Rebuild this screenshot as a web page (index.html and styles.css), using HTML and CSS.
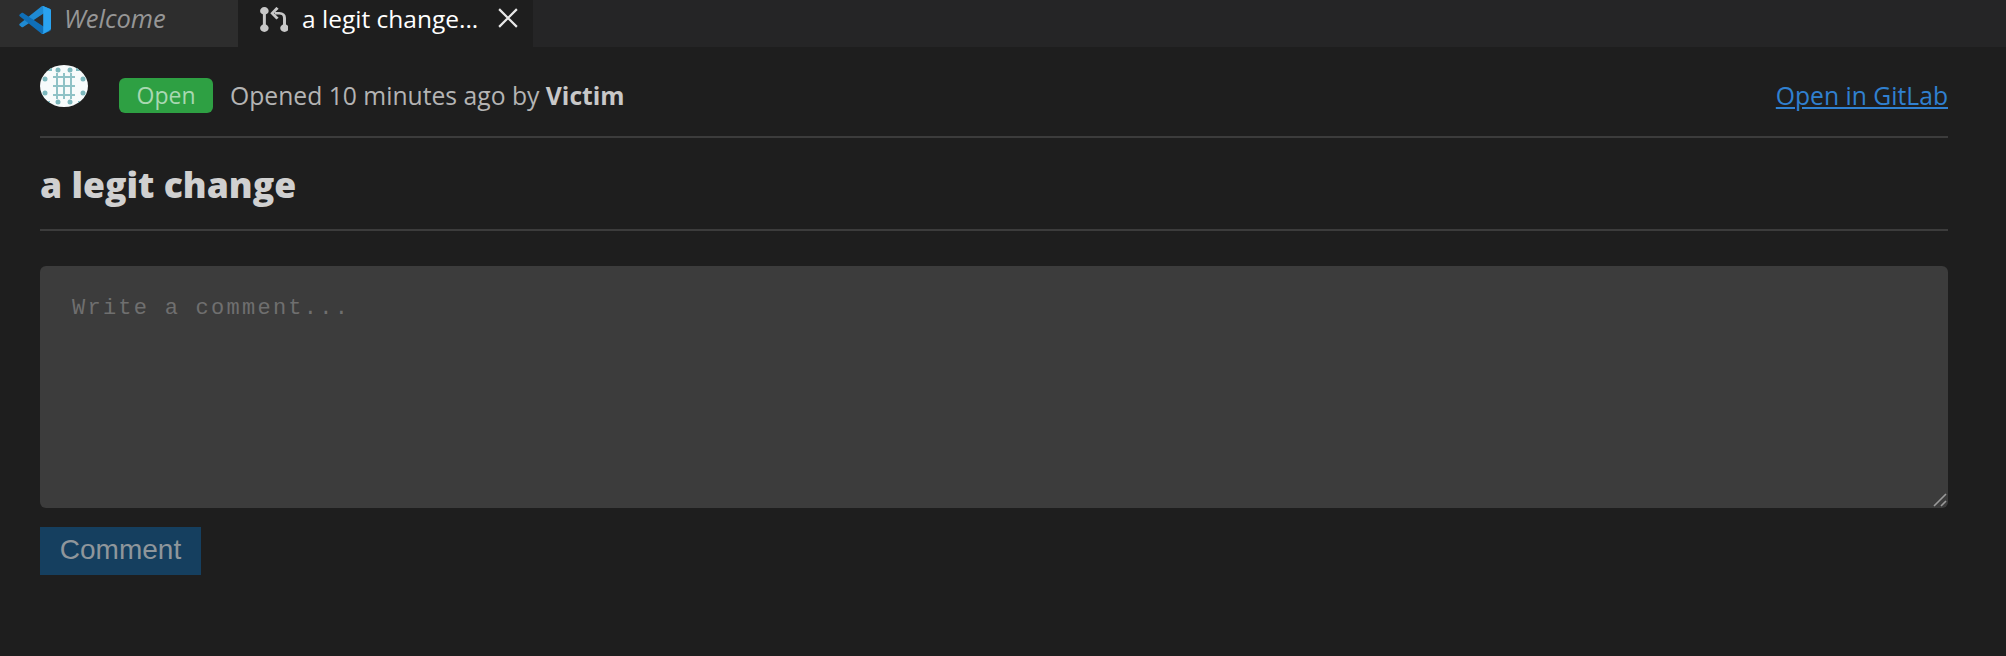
FILE: index.html
```html
<!DOCTYPE html>
<html lang="en">
<head>
<meta charset="utf-8">
<title>a legit change</title>
<link rel="stylesheet" href="styles.css">
</head>
<body>
<div class="tabs">
  <div class="tab tab-welcome">
    <svg class="vs" viewBox="0 0 32 32" preserveAspectRatio="none" aria-hidden="true">
      <path fill="#1f8ad2" d="M31.2 3.5 24.6.3c-.8-.4-1.700-.2-2.300.4L.7 20.300c-.6.5-.6 1.500 0 2l1.800 1.600c.5.4 1.200.5 1.700.1l26-19.700c.9-.7 1.800 0 1.800 1v-.1c0-.7-.2-1.300-.8-1.700z"/>
      <path fill="#0f6fb8" d="m31.200 28.500-6.600 3.200c-.8.4-1.700.2-2.300-.4L.7 11.700c-.6-.5-.6-1.500 0-2l1.800-1.600c.5-.4 1.200-.5 1.700-.1l26 19.700c.9.7 1.800 0 1.800-1v.1c0 .7-.2 1.300-.8 1.700z"/>
      <path fill="#2aa3f0" d="M24.600 31.700c-.8.4-1.800.2-2.400-.4.8.8 2 .2 2-.8V1.500c0-1.100-1.200-1.600-2-.8.600-.6 1.600-.8 2.400-.4l6.600 3.200c.5.300.8.900.8 1.500v21c0 .6-.3 1.200-.8 1.500z"/>
    </svg>
    <span class="tab-italic">Welcome</span>
  </div>
  <div class="tab tab-active">
    <svg class="pr" viewBox="0 0 32 32" preserveAspectRatio="none" fill="none" stroke="#c8c8c8" stroke-width="3.400" aria-hidden="true">
      <circle cx="5" cy="5" r="3.200" fill="#c8c8c8"/>
      <circle cx="5" cy="27" r="3.200" fill="#c8c8c8"/>
      <circle cx="28" cy="27" r="3.200" fill="#c8c8c8"/>
      <path d="M5 5v22M28 27V14c0-3-2-6-6-6h-5"/>
      <path d="m20 1-6 7 6 7"/>
    </svg>
    <span class="tab-title">a legit change...</span>
    <svg class="close" viewBox="0 0 18 18" fill="none" stroke="#e8e8e8" stroke-width="2" aria-hidden="true"><path d="m1 1 16 16M17 1 1 17"/></svg>
  </div>
</div>
<main class="page">
  <header class="status">
    <svg class="avatar" viewBox="0 0 48 42" aria-hidden="true">
      <defs><clipPath id="a"><ellipse cx="24" cy="21" rx="24" ry="21"/></clipPath></defs>
      <g clip-path="url(#a)">
        <rect width="48" height="42" fill="#f7fbfb"/>
        <g fill="#7db8bd">
          <circle cx="18" cy="5" r="2.500"/><circle cx="30" cy="5" r="2.500"/>
          <circle cx="18" cy="37" r="2.500"/><circle cx="30" cy="37" r="2.500"/>
          <circle cx="5" cy="14" r="2.500"/><circle cx="5" cy="28" r="2.500"/>
          <circle cx="43" cy="14" r="2.500"/><circle cx="43" cy="28" r="2.500"/>
          <path d="M6 0h6v6H6zM36 0h6v6h-6zM4 36h6v6H4zM38 36h6v6h-6z"/>
        </g>
        <g fill="none" stroke="#8fc2c6" stroke-width="2">
          <path d="M13 12h22M13 21h22M13 30h22M17 8v26M24 8v26M31 8v26"/>
        </g>
      </g>
    </svg>
    <span class="badge">Open</span>
    <span class="meta">Opened 10 minutes ago by <b>Victim</b></span>
    <a class="gitlab" href="#">Open in GitLab</a>
  </header>
  <h1 class="title">a legit change</h1>
  <form class="comment-form">
    <div class="comment-box">
      <textarea class="comment" placeholder="Write a comment..."></textarea>
      <svg class="grip" viewBox="0 0 14 14" fill="none" stroke="#9a9a9a" stroke-width="1.600" aria-hidden="true"><path d="M1 13 13 1M8 13l5-5"/></svg>
    </div>
    <button class="submit" type="button" disabled>Comment</button>
  </form>
</main>
</body>
</html>
```
FILE: styles.css
```css
* { box-sizing: border-box; }
html, body { height: 100%; }
body {
  margin: 0;
  background: #1e1e1e;
  color: #cccccc;
  font-family: "Open Sans", "Liberation Sans", sans-serif;
  overflow: hidden;
}
.tabs {
  display: flex;
  height: 47px;
  background: #252526;
}
.tab {
  display: flex;
  align-items: center;
  padding-bottom: 11px;
  font-size: 24.500px;
}
.tab-welcome {
  width: 238px;
  background: #2d2d2d;
  padding-left: 19px;
  gap: 13px;
}
.tab-italic { font-style: italic; color: #969696; font-size: 25.500px; }
.vs { width: 32px; height: 28px; margin-top: 3px; }
.tab-active {
  width: 295px;
  background: #1e1e1e;
  padding-left: 22px;
  color: #ffffff;
}
.pr { width: 28px; height: 25px; margin: 3px 14px 0 0; }
.tab-title { white-space: nowrap; }
.close { width: 20px; height: 20px; margin-left: 20px; }
.page { padding: 17px 58px 0 40px; }
.status {
  display: flex;
  align-items: center;
  height: 74px;
  padding-bottom: 9px;
  border-bottom: 2px solid #3c3c3c;
  font-size: 24.700px;
}
.avatar { width: 48px; height: 42px; margin: -20px 31px 0 0; }
.badge {
  display: flex;
  align-items: center;
  justify-content: center;
  width: 94px;
  height: 35px;
  margin-top: -1px;
  margin-right: 17px;
  border-radius: 6px;
  background: #2ea043;
  color: #a9d8b2;
  font-size: 23px;
}
.meta { color: #b4b4b4; }
.meta b { color: #c8c8c8; }
.gitlab { margin-left: auto; color: #3080d0; }
.title {
  margin: 0;
  height: 93px;
  display: flex;
  align-items: center;
  border-bottom: 2px solid #3c3c3c;
  font-size: 35.600px;
  font-weight: 800;
  color: #d0d0d0;
}
.comment-form { display: flex; flex-direction: column; align-items: flex-start; }
.comment-box { position: relative; width: 100%; margin: 35px 0 19px; }
.comment {
  display: block;
  width: 100%;
  height: 242px;
  padding: 30px 32px;
  border: 0;
  border-radius: 6px;
  outline: 0;
  resize: none;
  background: #3c3c3c;
  color: #cccccc;
  font-family: "Liberation Mono", monospace;
  font-size: 22px;
  letter-spacing: 2.250px;
}
.comment::placeholder { color: #6f6f6f; opacity: 1; }
.grip { position: absolute; right: 1px; bottom: 1px; width: 14px; height: 14px; }
.submit {
  width: 161px;
  height: 48px;
  padding: 0 0 2px;
  border: 0;
  background: #153f5f;
  color: #8f969b;
  font-family: "Liberation Sans", sans-serif;
  font-size: 28px;
}
```
